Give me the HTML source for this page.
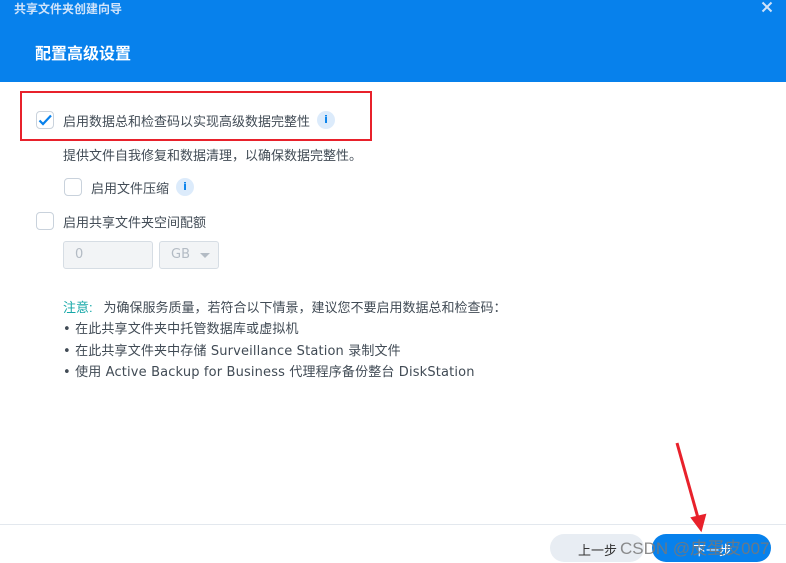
<!DOCTYPE html>
<html><head><meta charset="utf-8"><style>
*{margin:0;padding:0;box-sizing:border-box}
body{width:786px;height:563px;overflow:hidden;background:#fff;font-family:"Liberation Sans","Noto Sans CJK SC",sans-serif;color:#414b55;position:relative;font-size:13px}
.hdr{position:absolute;left:0;top:0;width:786px;height:82px;background:#0781ec}
.t1{position:absolute;left:14px;top:0px;font-size:12px;color:#cfe3fa;font-weight:bold}
.t2{position:absolute;left:35px;top:40px;font-size:16px;color:#fff;font-weight:bold}
.x{position:absolute;left:761px;top:1px}
.a{position:absolute;white-space:nowrap}
.dv{font-family:"DejaVu Sans","Noto Sans CJK SC",sans-serif;font-size:13px;letter-spacing:0.15px}
.cb{position:absolute;width:18px;height:18px;border:1px solid #c9d2dc;border-radius:4px;background:#fff}
.info{position:absolute;width:18px;height:18px;border-radius:50%;background:#dcebfb;color:#0781ec;font-size:11px;font-weight:bold;text-align:center;line-height:18px;font-family:"DejaVu Sans",sans-serif}
.inp{position:absolute;height:28px;border:1px solid #d6dde4;border-radius:3px;background:#f2f4f6;color:#b3bbc4;font-size:13px;line-height:26px;padding-left:11px;font-family:"DejaVu Sans",sans-serif}
</style></head><body>
<div class="hdr"><div class="t1">共享文件夹创建向导</div><div class="t2">配置高级设置</div>
<svg class="x" width="12" height="12" viewBox="0 0 12 12"><path d="M1.5 1.5L10.5 10.5M10.5 1.5L1.5 10.5" stroke="#cfe3fa" stroke-width="2"/></svg></div>
<div style="position:absolute;left:20px;top:91px;width:352px;height:50px;border:2px solid #e8212b"></div>
<div class="cb" style="left:36px;top:111px"><svg width="16" height="16" viewBox="0 0 16 16"><path d="M2.5 8.5L6 12L14 3.5" stroke="#0781ec" stroke-width="2.2" fill="none"/></svg></div>
<div class="a" style="left:63px;top:111px">启用数据总和检查码以实现高级数据完整性</div>
<div class="info" style="left:317px;top:111px">i</div>
<div class="a" style="left:63px;top:145px">提供文件自我修复和数据清理，以确保数据完整性。</div>
<div class="cb" style="left:64px;top:178px"></div>
<div class="a" style="left:91px;top:178px">启用文件压缩</div>
<div class="info" style="left:176px;top:178px">i</div>
<div class="cb" style="left:36px;top:212px"></div>
<div class="a" style="left:63px;top:212px">启用共享文件夹空间配额</div>
<div class="inp" style="left:63px;top:241px;width:90px">0</div>
<div class="inp" style="left:159px;top:241px;width:60px">GB<span style="position:absolute;left:40px;top:11px;width:0;height:0;border-left:5px solid transparent;border-right:5px solid transparent;border-top:5px solid #b3bbc4"></span></div>
<div class="a" style="left:63px;top:297px"><span style="color:#16a8a8">注意:</span>&nbsp;&nbsp;&nbsp;为确保服务质量，若符合以下情景，建议您不要启用数据总和检查码：</div>
<div class="a dv" style="left:63px;top:318px">•&nbsp;在此共享文件夹中托管数据库或虚拟机</div>
<div class="a dv" style="left:63px;top:340px">•&nbsp;在此共享文件夹中存储 Surveillance Station 录制文件</div>
<div class="a dv" style="left:63px;top:361px">•&nbsp;使用 Active Backup for Business 代理程序备份整台 DiskStation</div>
<div style="position:absolute;left:0;top:524px;width:786px;height:1px;background:#e3e8ee"></div>
<div style="position:absolute;left:550px;top:534px;width:94px;height:28px;border-radius:14px;background:#e8edf3"></div>
<div class="a" style="left:578px;top:540px;color:#333">上一步</div>
<div style="position:absolute;left:652px;top:534px;width:119px;height:28px;border-radius:14px;background:#0781ec"></div>
<div class="a" style="left:693px;top:540px;color:#fff">下一步</div>
<div class="a" style="left:620px;top:534px;font-size:17px;color:rgba(120,120,120,0.85)">CSDN @皮蛋皮007</div>
<svg style="position:absolute;left:0;top:0" width="786" height="563"><path d="M677 443L700 525" stroke="#e8212b" stroke-width="3"/><path d="M692 518L701 530L705 515Z" fill="#e8212b" stroke="#e8212b" stroke-width="2"/></svg>
</body></html>
